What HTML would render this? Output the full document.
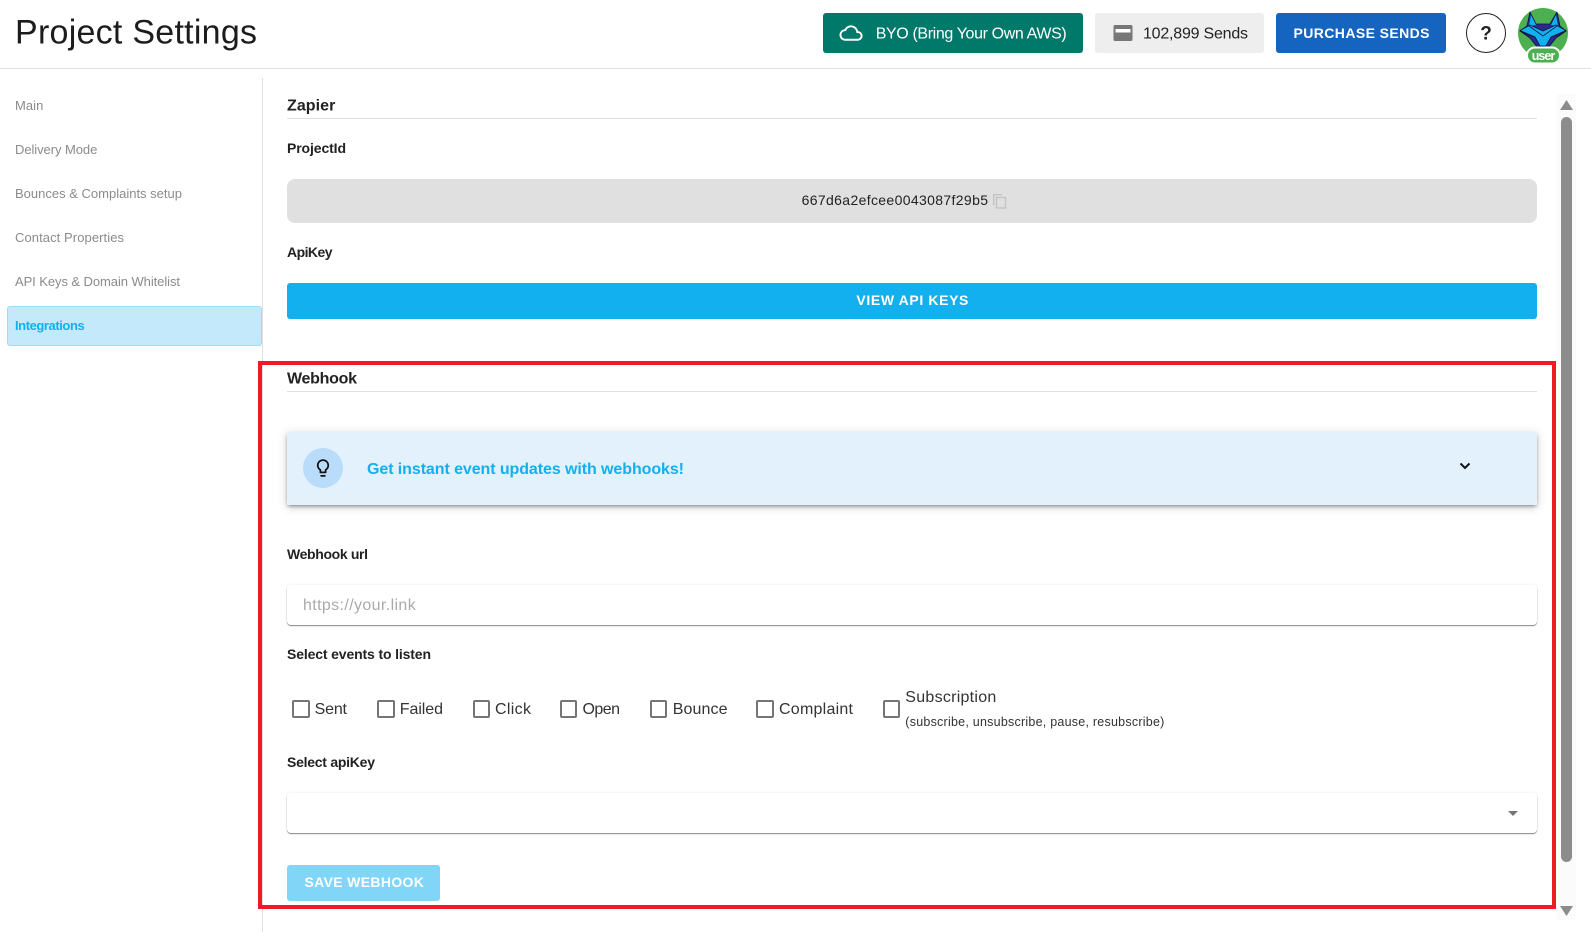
<!DOCTYPE html>
<html lang="en">
<head>
<meta charset="utf-8">
<title>Project Settings</title>
<style>
html,body{margin:0;padding:0;background:#fff;}
body{position:relative;width:1591px;height:932px;overflow:hidden;font-family:"Liberation Sans",sans-serif;}
.b{position:absolute;box-sizing:border-box;}
.cb{position:absolute;box-sizing:border-box;width:17.5px;height:17.5px;top:700px;border:2px solid #757575;border-radius:2px;}
svg.t{position:absolute;left:0;top:0;}
text{font-family:"Liberation Sans",sans-serif;}
.nav{font-size:13px;fill:#8b8b8b;}
.lab{font-size:14px;font-weight:bold;fill:#222;}
.h{font-size:16px;font-weight:bold;fill:#222;}
.ck{font-size:16px;fill:#333;}
</style>
</head>
<body>
<!-- header -->
<div class="b" style="left:0;top:68px;width:1591px;height:1px;background:#e0e0e0"></div>
<div class="b" style="left:823px;top:13px;width:260px;height:40px;background:#00796b;border-radius:3px"></div>
<div class="b" style="left:1095px;top:13px;width:169px;height:40px;background:#eeeeee;border-radius:3px"></div>
<div class="b" style="left:1276px;top:13px;width:170px;height:40px;background:#1565c0;border-radius:3px"></div>
<div class="b" style="left:1466px;top:13px;width:40px;height:40px;border:1.5px solid #222;border-radius:50%"></div>
<div class="b" style="left:1518px;top:8px;width:50px;height:50px;background:#4caf50;border-radius:50%"></div>

<!-- sidebar -->
<div class="b" style="left:262px;top:78px;width:1px;height:854px;background:#e0e0e0"></div>
<div class="b" style="left:7px;top:306px;width:255px;height:40px;background:#c4e9fb;border:1px solid #9cdcf8;border-radius:3px"></div>

<!-- main -->
<div class="b" style="left:287px;top:118px;width:1250px;height:1px;background:#e0e0e0"></div>
<div class="b" style="left:287px;top:179px;width:1250px;height:44px;background:#e0e0e0;border-radius:8px"></div>
<div class="b" style="left:287px;top:283px;width:1250px;height:36px;background:#12b0ef;border-radius:3px"></div>
<div class="b" style="left:287px;top:391px;width:1250px;height:1px;background:#e0e0e0"></div>
<div class="b" style="left:287px;top:432px;width:1250px;height:73px;background:#e3f1fc;box-shadow:0 2px 4px -1px rgba(0,0,0,.45),0 2px 10px rgba(0,0,0,.16)"></div>
<div class="b" style="left:303px;top:448px;width:40px;height:40px;background:#b9dcfa;border-radius:50%"></div>
<div class="b" style="left:287px;top:585px;width:1250px;height:40px;background:#fff;border-radius:4px;box-shadow:0 1px 1px rgba(0,0,0,.45),0 0 3px rgba(0,0,0,.08)"></div>
<div class="b" style="left:287px;top:793px;width:1250px;height:40px;background:#fff;border-radius:4px;box-shadow:0 1px 1px rgba(0,0,0,.45),0 0 3px rgba(0,0,0,.08)"></div>
<div class="b" style="left:287px;top:865px;width:153px;height:36px;background:#81d5f7;border-radius:3px"></div>

<!-- checkboxes -->
<div class="cb" style="left:292px"></div>
<div class="cb" style="left:377px"></div>
<div class="cb" style="left:472.7px"></div>
<div class="cb" style="left:559.7px"></div>
<div class="cb" style="left:649.7px"></div>
<div class="cb" style="left:756px"></div>
<div class="cb" style="left:882.7px"></div>

<!-- red frame -->
<div class="b" style="left:258px;top:361px;width:1298px;height:548px;border:4.5px solid #ed1c24"></div>

<!-- scrollbar -->
<div class="b" style="left:1557px;top:94px;width:19px;height:826px;background:#fbfbfb"></div>
<div class="b" style="left:1561px;top:117px;width:11px;height:745px;background:#8c8c8c;border-radius:5.5px"></div>

<svg class="t" width="1591" height="932" viewBox="0 0 1591 932" xmlns="http://www.w3.org/2000/svg">
  <!-- scroll arrows -->
  <path d="M1566.5 100 L1573 110 L1560 110 Z" fill="#8c8c8c"/>
  <path d="M1566.5 916 L1573 906 L1560 906 Z" fill="#8c8c8c"/>

  <!-- select arrow -->
  <path d="M1508 811 L1518 811 L1513 816 Z" fill="#757575"/>
  <!-- chevron -->
  <path d="M1460.5 463.5 L1465 468 L1469.5 463.5" fill="none" stroke="#111" stroke-width="2"/>

  <!-- cloud -->
  <g transform="translate(839.5 21.5) scale(.96)"><path fill="#fff" d="M12 6c2.62 0 4.88 1.86 5.39 4.43l.3 1.5 1.53.11c1.56.1 2.78 1.41 2.78 2.96 0 1.65-1.35 3-3 3H6c-2.21 0-4-1.79-4-4 0-2.05 1.53-3.76 3.56-3.97l1.07-.11.5-.95C8.08 7.14 9.94 6 12 6m0-2C9.11 4 6.6 5.64 5.35 8.04 2.34 8.36 0 10.91 0 14c0 3.31 2.69 6 6 6h13c2.76 0 5-2.24 5-5 0-2.64-2.05-4.78-4.65-4.96C18.67 6.59 15.64 4 12 4z"/></g>
  <!-- card -->
  <rect x="1113.5" y="25" width="19" height="16" rx="1.5" fill="#777"/>
  <rect x="1115.5" y="29" width="15" height="3.5" fill="#fff"/>

  <!-- bulb -->
  <g transform="translate(312.5 457.5) scale(.875)"><path fill="#111" d="M9 21c0 .55.45 1 1 1h4c.55 0 1-.45 1-1v-1H9v1zm3-19C8.14 2 5 5.14 5 9c0 2.38 1.19 4.47 3 5.74V17c0 .55.45 1 1 1h6c.55 0 1-.45 1-1v-2.26c1.81-1.27 3-3.36 3-5.74 0-3.86-3.14-7-7-7zm2.85 11.1l-.85.6V16h-4v-2.3l-.85-.6C7.8 12.16 7 10.63 7 9c0-2.76 2.24-5 5-5s5 2.24 5 5c0 1.63-.8 3.16-2.15 4.1z"/></g>

  <!-- copy icon -->
  <g fill="none" stroke="#c4c4c4" stroke-width="1.4">
    <path d="M993.7 205 V194.7 H1002"/>
    <rect x="996.5" y="197.5" width="9" height="10.5" fill="#e0e0e0"/>
  </g>

  <!-- fox -->
  <path d="M1530 12 L1536 24 L1550 24 L1557 12 L1560 26 L1566 31 L1556 38 L1548 48 L1538 48 L1530 38 L1520 31 L1527 26 Z" fill="#2a2a8c" stroke="#0d1440" stroke-width=".8" stroke-linejoin="round"/>
  <path d="M1531 15 L1536 25 L1529 26 Z M1556 15 L1551 25 L1558 26 Z" fill="#12b0ef"/>
  <path d="M1520 30.5 L1530 25 L1543 31 L1556 25 L1566 30.5 L1558 35 L1551 37 L1546 46 L1540 46 L1535 37 L1528 35 Z" fill="#12b0ef" stroke="#0d1440" stroke-width=".8" stroke-linejoin="round"/>
  <path d="M1529 26 L1543 36 L1557 26 M1520 30.5 L1535 37 M1566 30.5 L1551 37" fill="none" stroke="#0d1440" stroke-width=".8"/>

  <!-- badge -->
  <rect x="1527" y="47.5" width="33" height="16" rx="8" fill="#4caf50" stroke="#fff" stroke-width="2"/>

  <!-- header text -->
  <text x="15" y="43.5" font-size="34" fill="#1c1c1c" textLength="242" lengthAdjust="spacing">Project Settings</text>
  <text x="875.7" y="38.5" font-size="16" fill="#fff" textLength="191" lengthAdjust="spacing">BYO (Bring Your Own AWS)</text>
  <text x="1143" y="38.5" font-size="16" fill="#222" textLength="105" lengthAdjust="spacing">102,899 Sends</text>
  <text x="1293.5" y="38" font-size="14" font-weight="bold" fill="#fff" textLength="136" lengthAdjust="spacing">PURCHASE SENDS</text>
  <text x="1486" y="39.5" font-size="19" font-weight="bold" fill="#222" text-anchor="middle">?</text>
  <text x="1531.7" y="60" font-size="12.5" font-weight="bold" fill="#fff" textLength="23.5" lengthAdjust="spacing">user</text>

  <!-- nav -->
  <text class="nav" x="15" y="110" textLength="28.3" lengthAdjust="spacing">Main</text>
  <text class="nav" x="15" y="154" textLength="82.3" lengthAdjust="spacing">Delivery Mode</text>
  <text class="nav" x="15" y="198" textLength="167" lengthAdjust="spacing">Bounces &amp; Complaints setup</text>
  <text class="nav" x="15" y="242" textLength="109" lengthAdjust="spacing">Contact Properties</text>
  <text class="nav" x="15" y="286" textLength="165" lengthAdjust="spacing">API Keys &amp; Domain Whitelist</text>
  <text x="15" y="330" font-size="13" font-weight="bold" fill="#12b0ef" textLength="69.7" lengthAdjust="spacing">Integrations</text>

  <!-- zapier -->
  <text class="h" x="287" y="110.5" textLength="48.3" lengthAdjust="spacing">Zapier</text>
  <text class="lab" x="287" y="153" textLength="59" lengthAdjust="spacing">ProjectId</text>
  <text x="801.6" y="205" font-size="14" fill="#222" textLength="186.4" lengthAdjust="spacing">667d6a2efcee0043087f29b5</text>
  <text class="lab" x="287" y="257" textLength="45.5" lengthAdjust="spacing">ApiKey</text>
  <text x="856.4" y="305" font-size="14" font-weight="bold" fill="#fff" textLength="112" lengthAdjust="spacing">VIEW API KEYS</text>

  <!-- webhook -->
  <text class="h" x="287" y="383.5" textLength="70" lengthAdjust="spacing">Webhook</text>
  <text x="367" y="474" font-size="16" font-weight="bold" fill="#12b0ef" textLength="317" lengthAdjust="spacing">Get instant event updates with webhooks!</text>
  <text class="lab" x="287" y="559" textLength="81" lengthAdjust="spacing">Webhook url</text>
  <text x="303" y="610" font-size="16" fill="#aaa" textLength="112.7" lengthAdjust="spacing">https://your.link</text>
  <text class="lab" x="287" y="659" textLength="144" lengthAdjust="spacing">Select events to listen</text>

  <text class="ck" x="314.6" y="714" textLength="32.4" lengthAdjust="spacing">Sent</text>
  <text class="ck" x="399.8" y="714" textLength="43.2" lengthAdjust="spacing">Failed</text>
  <text class="ck" x="495" y="714" textLength="36" lengthAdjust="spacing">Click</text>
  <text class="ck" x="582.5" y="714" textLength="37.5" lengthAdjust="spacing">Open</text>
  <text class="ck" x="672.7" y="714" textLength="54.8" lengthAdjust="spacing">Bounce</text>
  <text class="ck" x="779" y="714" textLength="74" lengthAdjust="spacing">Complaint</text>
  <text class="ck" x="905.3" y="702" textLength="91" lengthAdjust="spacing">Subscription</text>
  <text x="905.3" y="726" font-size="12.5" fill="#333" textLength="259" lengthAdjust="spacing">(subscribe, unsubscribe, pause, resubscribe)</text>

  <text class="lab" x="287" y="767" textLength="88" lengthAdjust="spacing">Select apiKey</text>
  <text x="304.5" y="887" font-size="14" font-weight="bold" fill="#fff" textLength="119.4" lengthAdjust="spacing">SAVE WEBHOOK</text>
</svg>
</body>
</html>
